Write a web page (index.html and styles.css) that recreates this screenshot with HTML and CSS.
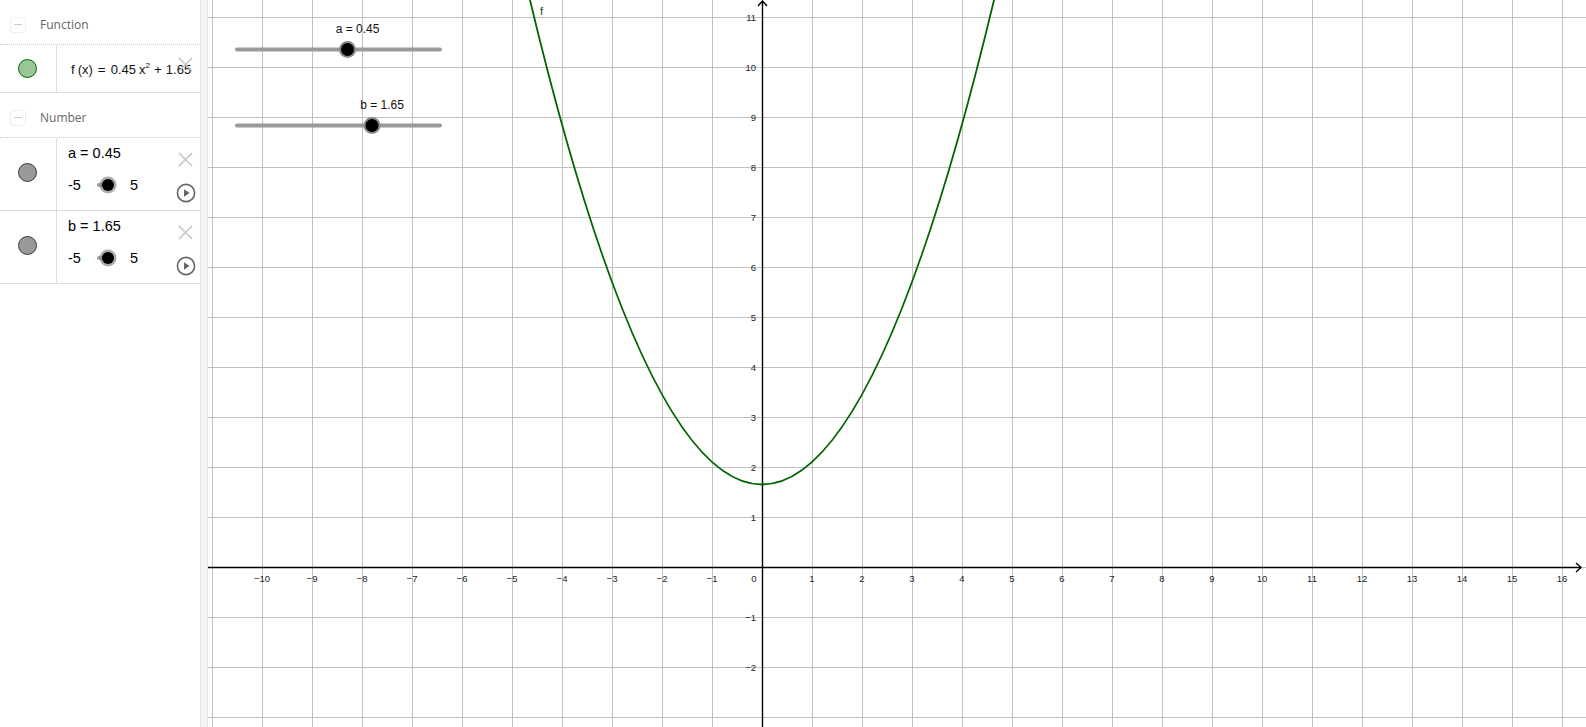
FILE: index.html
```html
<!DOCTYPE html>
<html lang="en">
<head>
<meta charset="utf-8">
<title>Graph</title>
<link rel="stylesheet" href="styles.css">
</head>
<body>
<div class="app">
  <aside class="algebra">
    <div class="group-head"><span class="collapse"></span><span class="group-title">Function</span></div>
    <div class="item item-f">
      <div class="marble-col"><span class="marble marble-green"></span></div>
      <div class="item-body formula-body">
        <div class="formula">f<span class="paren">(x)</span><span class="op">=</span>0.45<span class="var">x<sup>2</sup></span><span class="op op-plus">+</span>1.65</div>
      </div>
      <div class="item-ctrl ctrl-f">
        <svg class="del" width="15" height="15" viewBox="0 0 15 15"><path d="M1 1 L14 14 M14 1 L1 14"/></svg>
      </div>
    </div>

    <div class="group-head"><span class="collapse"></span><span class="group-title">Number</span></div>
    <div class="item item-num">
      <div class="marble-col"><span class="marble marble-gray"></span></div>
      <div class="item-body">
        <div class="num-name">a = 0.45</div>
        <div class="num-slider"><span>-5</span><span class="mini"><span class="mini-fill"></span><span class="mini-knob"></span></span><span>5</span></div>
      </div>
      <div class="item-ctrl">
        <svg class="del" width="15" height="15" viewBox="0 0 15 15"><path d="M1 1 L14 14 M14 1 L1 14"/></svg>
        <svg class="play" width="20" height="20" viewBox="0 0 20 20"><circle cx="10" cy="10" r="8.6"/><polygon points="8,6.3 13.6,10 8,13.7"/></svg>
      </div>
    </div>
    <div class="item item-num">
      <div class="marble-col"><span class="marble marble-gray"></span></div>
      <div class="item-body">
        <div class="num-name">b = 1.65</div>
        <div class="num-slider"><span>-5</span><span class="mini"><span class="mini-fill"></span><span class="mini-knob"></span></span><span>5</span></div>
      </div>
      <div class="item-ctrl">
        <svg class="del" width="15" height="15" viewBox="0 0 15 15"><path d="M1 1 L14 14 M14 1 L1 14"/></svg>
        <svg class="play" width="20" height="20" viewBox="0 0 20 20"><circle cx="10" cy="10" r="8.6"/><polygon points="8,6.3 13.6,10 8,13.7"/></svg>
      </div>
    </div>
  </aside>

  <div class="splitter"></div>

  <main class="graphics">
    <svg class="plot" width="1378" height="727" viewBox="208 0 1378 727">
      <defs>
        <pattern id="grid" patternUnits="userSpaceOnUse" x="212" y="17" width="50" height="50">
          <path d="M0.5 0 V50 M0 0.5 H50" class="grid-line"/>
        </pattern>
      </defs>
      <rect x="208" y="0" width="1378" height="727" fill="url(#grid)"/>

      <g class="axes">
        <path d="M208 567.5 H1581"/>
        <path d="M1576 563 L1581 567.5 L1576 572"/>
        <path d="M762.5 727 V1"/>
        <path d="M758 6 L762.5 1 L767 6"/>
      </g>

      <g class="xlabels">
        <text x="262" y="582">−10</text>
        <text x="312" y="582">−9</text>
        <text x="362" y="582">−8</text>
        <text x="412" y="582">−7</text>
        <text x="462" y="582">−6</text>
        <text x="512" y="582">−5</text>
        <text x="562" y="582">−4</text>
        <text x="612" y="582">−3</text>
        <text x="662" y="582">−2</text>
        <text x="712" y="582">−1</text>
        <text x="754" y="582">0</text>
        <text x="812" y="582">1</text>
        <text x="862" y="582">2</text>
        <text x="912" y="582">3</text>
        <text x="962" y="582">4</text>
        <text x="1012" y="582">5</text>
        <text x="1062" y="582">6</text>
        <text x="1112" y="582">7</text>
        <text x="1162" y="582">8</text>
        <text x="1212" y="582">9</text>
        <text x="1262" y="582">10</text>
        <text x="1312" y="582">11</text>
        <text x="1362" y="582">12</text>
        <text x="1412" y="582">13</text>
        <text x="1462" y="582">14</text>
        <text x="1512" y="582">15</text>
        <text x="1562" y="582">16</text>
      </g>
      <g class="ylabels">
        <text x="756" y="20.5">11</text>
        <text x="756" y="70.5">10</text>
        <text x="756" y="120.5">9</text>
        <text x="756" y="170.5">8</text>
        <text x="756" y="220.5">7</text>
        <text x="756" y="270.5">6</text>
        <text x="756" y="320.5">5</text>
        <text x="756" y="370.5">4</text>
        <text x="756" y="420.5">3</text>
        <text x="756" y="470.5">2</text>
        <text x="756" y="520.5">1</text>
        <text x="756" y="620.5">−1</text>
        <text x="756" y="670.5">−2</text>
      </g>

      <path class="curve" d="M529.5 -2 Q762 971 994.5 -2"/>
      <text class="curve-label" x="540" y="15">f</text>

      <g class="slider">
        <line x1="237" y1="49.5" x2="440" y2="49.5"/>
        <circle class="knob-halo" cx="347.5" cy="49.5" r="8.5"/>
        <circle class="knob" cx="347.5" cy="49.5" r="6.5"/>
        <text x="357.5" y="33">a = 0.45</text>
      </g>
      <g class="slider">
        <line x1="237" y1="125.5" x2="440" y2="125.5"/>
        <circle class="knob-halo" cx="372" cy="125.5" r="8.5"/>
        <circle class="knob" cx="372" cy="125.5" r="6.5"/>
        <text x="382" y="109">b = 1.65</text>
      </g>
    </svg>
  </main>
</div>
</body>
</html>
```

FILE: styles.css
```css
* { box-sizing: border-box; }
html, body {
  margin: 0;
  padding: 0;
  height: 100%;
  overflow: hidden;
  background: #fff;
  font-family: "Liberation Sans", Arial, sans-serif;
}
.app {
  display: flex;
  height: 727px;
  width: 1586px;
}
.algebra {
  width: 200px;
  flex: none;
  background: #fff;
  color: #000;
}
.group-head {
  height: 45px;
  padding: 5px 0 0 10px;
  display: flex;
  align-items: center;
  border-bottom: 1px dotted #c8c8c8;
}
.collapse {
  width: 16px;
  height: 16px;
  border: 1px solid #eeeeee;
  border-radius: 3px;
  margin-right: 14px;
  position: relative;
}
.collapse::after {
  content: "";
  position: absolute;
  left: 3px;
  right: 3px;
  top: 6.5px;
  height: 1px;
  background: #cccccc;
}
.group-title {
  font-family: "Open Sans", "Liberation Sans", sans-serif;
  font-size: 12px;
  color: #666666;
}
.item {
  display: grid;
  grid-template-columns: 57px 1fr 28px;
  border-bottom: 1px solid #dddddd;
}
.item-f { height: 48px; }
.item-num { height: 73px; }
.marble-col {
  border-right: 1px solid #dddddd;
  display: flex;
  align-items: center;
  justify-content: center;
  padding-right: 1px;
}
.item-num .marble-col { padding-bottom: 3px; }
.marble {
  width: 19px;
  height: 19px;
  border-radius: 50%;
  display: block;
}
.marble-green {
  background: #99c699;
  border: 1px solid #006400;
}
.marble-gray {
  background: #999999;
  border: 1px solid #3a3a3a;
}
.item-body {
  min-width: 0;
  white-space: nowrap;
}
.formula-body {
  display: flex;
  align-items: center;
  padding-left: 14px;
  padding-top: 1px;
}
.formula {
  font-size: 13px;
  color: #111;
}
.formula .paren { margin-left: 3px; }
.formula .op { margin: 0 5px; font-size: 13.5px; }
.formula .op-plus { margin: 0 4px; }
.formula .var { margin-left: 3px; }
.formula sup { font-size: 8px; vertical-align: 6px; line-height: 0; }
.item-num .item-body {
  padding: 5px 0 0 11px;
  font-size: 14.5px;
}
.num-name { line-height: 20px; height: 20px; }
.num-slider {
  margin-top: 12px;
  height: 20px;
  display: flex;
  align-items: center;
}
.mini {
  position: relative;
  width: 22px;
  height: 14px;
  margin: 0 11px 0 16px;
}
.mini-fill {
  position: absolute;
  left: 0;
  top: 5px;
  width: 10px;
  height: 4px;
  background: #a0a0a0;
  border-radius: 2px;
}
.mini-knob {
  position: absolute;
  left: 5.5px;
  top: 1px;
  width: 12px;
  height: 12px;
  border-radius: 50%;
  background: #000;
  box-shadow: 0 0 0 2.5px rgba(128, 128, 128, 0.65);
}
.item-ctrl {
  display: flex;
  flex-direction: column;
  align-items: center;
  padding-top: 14px;
  padding-right: 1px;
}
.ctrl-f { padding-top: 12px; }
.del path {
  stroke: #c4c4c4;
  stroke-width: 1.6;
  fill: none;
}
.play { margin-top: 16px; }
.play circle {
  fill: none;
  stroke: #666666;
  stroke-width: 1.6;
}
.play polygon { fill: #666666; }

.splitter {
  width: 8px;
  flex: none;
  background: #f4f4f4;
  border-left: 1px solid #e2e2e2;
  border-right: 1px solid #e2e2e2;
}
.graphics {
  flex: 1;
  position: relative;
  overflow: hidden;
  background: #fff;
}
.plot { display: block; }
.grid-line {
  stroke: #c0c0c0;
  stroke-width: 1;
  fill: none;
}
.axes path {
  stroke: #000;
  stroke-width: 1.4;
  fill: none;
}
.xlabels text, .ylabels text {
  font-family: "Liberation Sans", Arial, sans-serif;
  font-size: 9.5px;
  fill: #222;
}
.xlabels text { text-anchor: middle; }
.ylabels text { text-anchor: end; }
.curve {
  stroke: #006400;
  stroke-width: 1.8;
  fill: none;
}
.curve-label {
  font-family: "Liberation Sans", Arial, sans-serif;
  font-size: 11px;
  fill: #004d00;
}
.slider line {
  stroke: #9a9a9a;
  stroke-width: 4;
  stroke-linecap: round;
}
.knob-halo { fill: #8a8a8a; }
.knob { fill: #000; }
.slider text {
  font-family: "Liberation Sans", Arial, sans-serif;
  font-size: 12px;
  fill: #111;
  text-anchor: middle;
}
```
